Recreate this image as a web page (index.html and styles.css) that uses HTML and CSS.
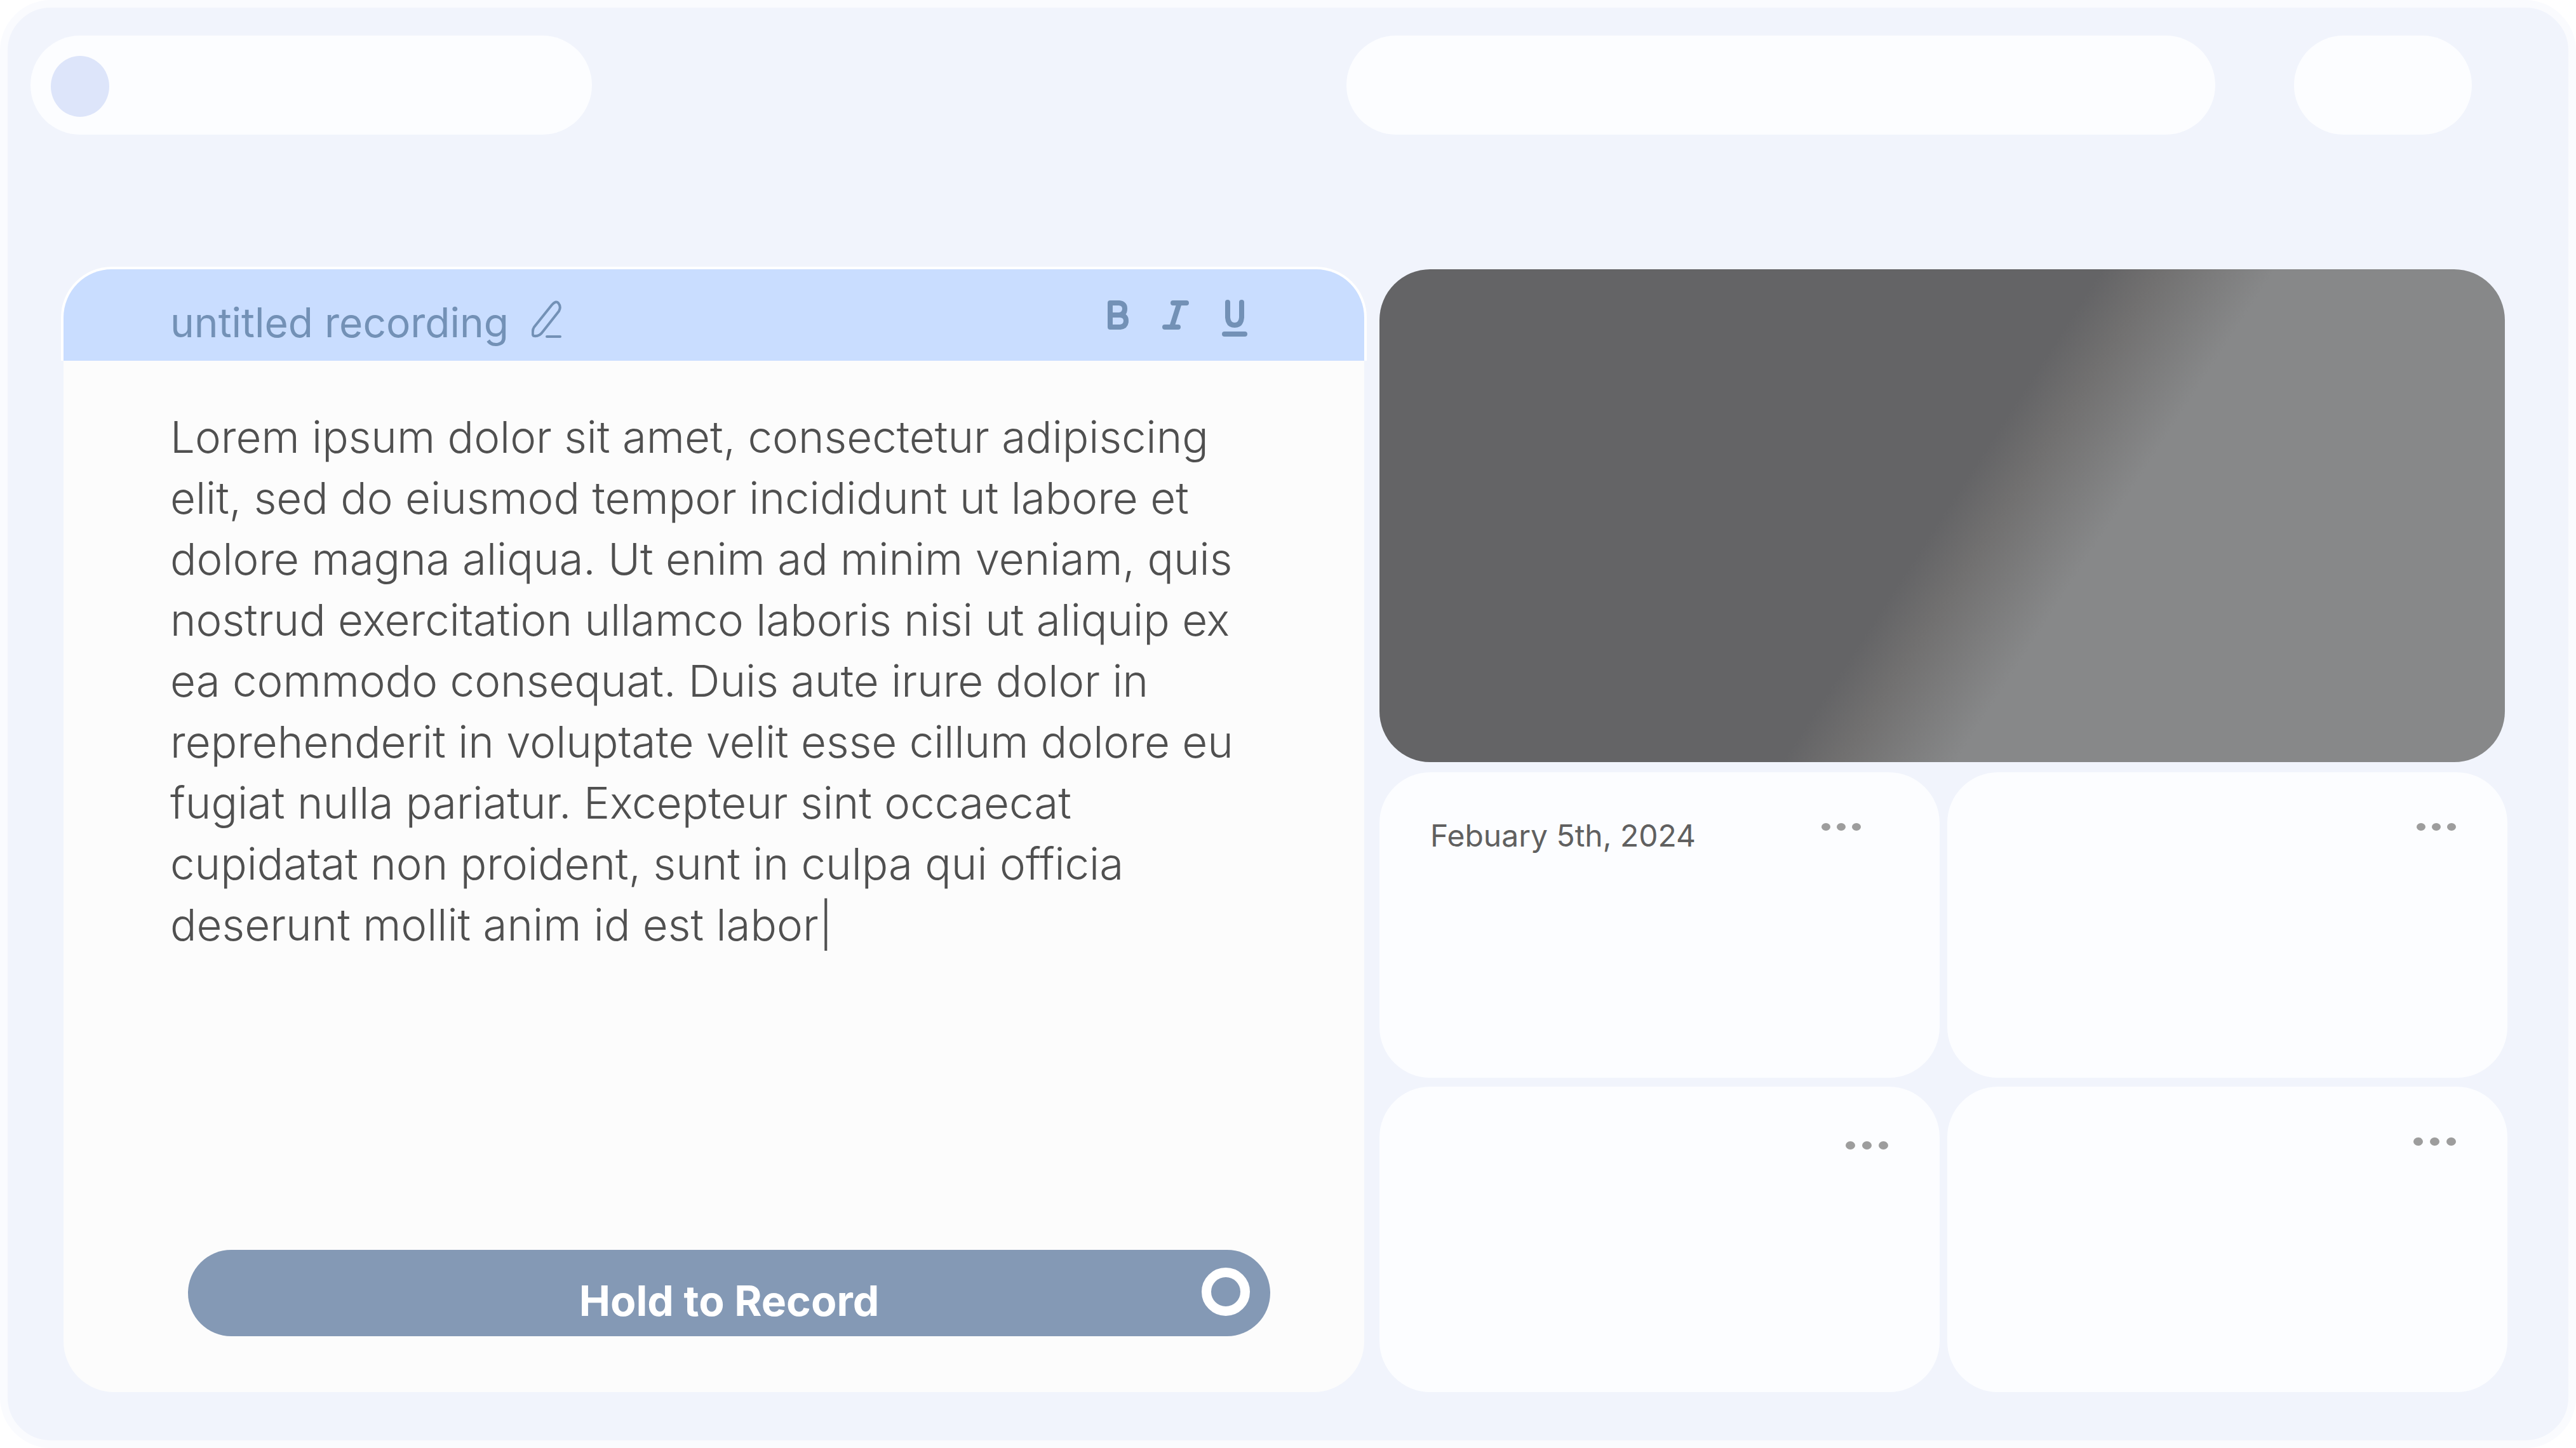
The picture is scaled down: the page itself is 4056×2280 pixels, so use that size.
FILE: index.html
```
<!DOCTYPE html>
<html lang="en">
<head>
<meta charset="utf-8">
<meta name="viewport" content="width=device-width, initial-scale=1">
<title>Voice notes</title>
<link rel="stylesheet" href="styles.css">
</head>
<body>
<div class="frame">
  <header class="topbar">
    <div class="pill pill-profile"><span class="avatar"></span></div>
    <div class="pill pill-search"></div>
    <div class="pill pill-actions"></div>
  </header>
  <main class="workspace">
    <section class="editor">
      <div class="editor-head">
        <h1 class="title">untitled recording</h1>
        <button class="icon-button rename" type="button" aria-label="Rename">
          <svg width="48" height="60" viewBox="0 0 48 60" fill="none" stroke="currentColor" stroke-width="4" stroke-linecap="round" stroke-linejoin="round"><path d="M4 43 32 8Q38 1 42 5Q47 11 43 18L17 51Q12 58 4 57Q1 57 2 49Q2 46 4 43Z"/><path d="M24 58H45"/></svg>
        </button>
        <div class="format">
          <button class="icon-button" type="button" aria-label="Bold">
            <svg width="34" height="60" viewBox="0 0 34 60" fill="none" stroke="currentColor" stroke-width="8" stroke-linejoin="round"><path d="M4 5H18Q27 6 27 14Q27 23 18 24H4ZM4 24H20Q29 25 29 33Q29 42 20 43H4Z"/></svg>
          </button>
          <button class="icon-button" type="button" aria-label="Italic">
            <svg width="44" height="60" viewBox="0 0 44 60" fill="none" stroke="currentColor" stroke-width="8" stroke-linecap="round"><path d="M18 5H39M5 43H26M28 5 16 43"/></svg>
          </button>
          <button class="icon-button" type="button" aria-label="Underline">
            <svg width="40" height="60" viewBox="0 0 40 60" fill="none" stroke="currentColor" stroke-width="8" stroke-linecap="round"><path d="M9 4V28Q10 40 20 40Q30 40 31 28V4M4 54H36"/></svg>
          </button>
        </div>
      </div>
      <div class="editor-body">
        <p class="transcript">Lorem ipsum dolor sit amet, consectetur adipiscing<br>elit, sed do eiusmod tempor incididunt ut labore et<br>dolore magna aliqua. Ut enim ad minim veniam, quis<br>nostrud exercitation ullamco laboris nisi ut aliquip ex<br>ea commodo consequat. Duis aute irure dolor in<br>reprehenderit in voluptate velit esse cillum dolore eu<br>fugiat nulla pariatur. Excepteur sint occaecat<br>cupidatat non proident, sunt in culpa qui officia<br>deserunt mollit anim id est labor|</p>
        <button class="record" type="button"><span class="record-label">Hold to Record</span><span class="record-ring"></span></button>
      </div>
    </section>
    <section class="library">
      <div class="preview"></div>
      <div class="cards">
        <article class="card card-dated">
          <time class="date" datetime="2024-02-05">Febuary 5th, 2024</time>
          <button class="dots" type="button" aria-label="More"><i></i><i></i><i></i></button>
        </article>
        <article class="card"><button class="dots" type="button" aria-label="More"><i></i><i></i><i></i></button></article>
        <article class="card card-inset"><button class="dots dots-large" type="button" aria-label="More"><i></i><i></i><i></i></button></article>
        <article class="card"><button class="dots dots-large" type="button" aria-label="More"><i></i><i></i><i></i></button></article>
      </div>
    </section>
  </main>
</div>
</body>
</html>
```
FILE: styles.css
```
* { box-sizing: border-box; }
body { margin: 0; background: #fff; font-family: Inter, "Liberation Sans", sans-serif; }
button { padding: 0; border: 0; background: none; font: inherit; cursor: pointer; }

.frame {
  display: flex;
  flex-direction: column;
  min-height: 100vh;
  padding: 44px 96px 76px 84px;
  border: 12px solid #fafbfe;
  border-radius: 80px;
  background: #f1f4fc;
}

.topbar { display: flex; margin: 0 56px 0 -48px; }
.pill { height: 156px; border-radius: 78px; background: #fcfdff; }
.pill-profile { flex: 884; margin-right: 1188px; }
.avatar { display: block; width: 92px; height: 96px; margin: 32px; border-radius: 50%; background: #dde5fa; }
.pill-search { flex: 1368; margin-right: 124px; }
.pill-actions { flex: 280; }

.workspace { display: flex; flex: 1; gap: 20px; margin-top: 208px; }

.editor { display: flex; flex: 2056; flex-direction: column; min-width: 0; }
.editor-head {
  display: flex;
  height: 148px;
  padding: 48px 184px 0 168px;
  border: 4px solid #fff;
  border-bottom: 0;
  border-radius: 80px 80px 0 0;
  background: #c9ddff;
  color: #7391b6;
}
.title { margin: 0; font-size: 64px; font-weight: 400; line-height: 72px; white-space: nowrap; }
.icon-button { display: flex; color: inherit; }
.icon-button svg { display: block; }
.rename { margin-left: 36px; }
.format { display: flex; gap: 51px; margin-left: auto; }
.editor-body {
  display: flex;
  flex: 1;
  flex-direction: column;
  justify-content: space-between;
  margin: 0 4px;
  padding: 72px 148px 88px 168px;
  border-radius: 0 0 80px 80px;
  background: #fcfcfc;
}
.transcript { margin: 0; color: #505050; font-size: 69px; font-weight: 300; line-height: 96px; white-space: nowrap; }
.record {
  display: flex;
  align-items: center;
  height: 136px;
  margin-left: 28px;
  padding: 0 32px 4px 0;
  border-radius: 68px;
  background: #8499b5;
  color: #fff;
}
.record-label { flex: 1; padding: 28px 0 0 108px; font-size: 66px; font-weight: 700; line-height: 72px; }
.record-ring { width: 76px; height: 76px; border: 15px solid #fff; border-radius: 50%; }

.library { display: flex; flex: 1776; flex-direction: column; gap: 16px; min-width: 0; padding-top: 4px; }
.preview {
  height: 776px;
  margin-right: 4px;
  border-radius: 80px;
  background: linear-gradient(123deg, #646466 50%, #717070 54%, #878889 62%, #878889);
}
.cards {
  display: grid;
  flex: 1;
  grid-template-rows: repeat(2, minmax(0, 1fr));
  grid-template-columns: repeat(2, minmax(0, 1fr));
  gap: 14px 12px;
}
.card { display: flex; align-items: flex-start; justify-content: flex-end; padding: 80px 81px 0; border-radius: 80px; background: #fcfdff; }
.card-dated { justify-content: space-between; padding: 64px 124px 0 80px; }
.card-dated .dots { margin-top: 16px; }
.card-inset { padding-top: 86px; }
.date { color: #606060; font-size: 48px; font-weight: 400; line-height: 72px; white-space: nowrap; }
.dots { display: flex; gap: 10px; }
.dots i { width: 14px; height: 12px; border-radius: 50%; background: #9d9d9d; }
.dots-large { gap: 11px; }
.dots-large i { width: 15px; height: 13px; }
```
